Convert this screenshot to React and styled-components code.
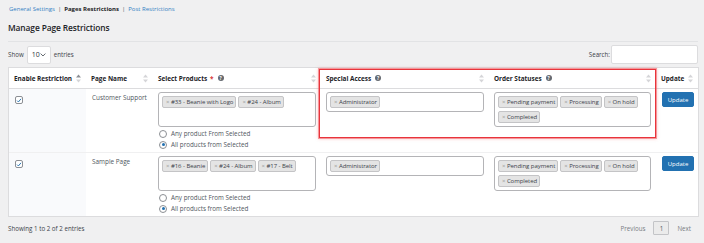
import * as React from "react"
import styled, { createGlobalStyle } from "styled-components"

const GlobalStyle = createGlobalStyle`
  html, body {
    margin: 0;
    padding: 0;
    background: #f0f0f1;
  }
  body {
    font-family: "Open Sans", "Noto Sans", sans-serif;
    color: #3c434a;
    width: 704px;
    height: 243px;
    overflow: hidden;
  }
  * {
    box-sizing: border-box;
  }
`

const rows = [
  {
    page: "Customer Support",
    products: ["#33 - Beanie with Logo", "#24 - Album"],
    access: ["Administrator"],
    statuses: ["Pending payment", "Processing", "On hold", "Completed"],
  },
  {
    page: "Sample Page",
    products: ["#16 - Beanie", "#24 - Album", "#17 - Belt"],
    access: ["Administrator"],
    statuses: ["Pending payment", "Processing", "On hold", "Completed"],
  },
]

const columns = [
  { label: "Enable Restriction", width: 77, sorted: true },
  { label: "Page Name", width: 67 },
  { label: "Select Products", width: 168, required: true, help: true },
  { label: "Special Access", width: 168, help: true },
  { label: "Order Statuses", width: 167, help: true },
  { label: "Update", width: 42 },
]

const SortIcon = ({ active }) => (
  <svg width="5" height="9" viewBox="0 0 5 9">
    <polygon points="2.5,0.5 5,3.6 0,3.6" fill={active ? "#8c8f94" : "#d5d5d8"} />
    <polygon points="0,5.4 5,5.4 2.5,8.5" fill="#d5d5d8" />
  </svg>
)

const CheckIcon = () => (
  <svg width="7" height="7" viewBox="0 0 10 10">
    <path d="M1.8 5.2 L4 7.4 L8.4 2.2" fill="none" stroke="#2271b1" strokeWidth="1.6" />
  </svg>
)

const Chevron = () => (
  <svg width="6" height="4" viewBox="0 0 6 4">
    <path d="M0.6 0.6 L3 3 L5.4 0.6" fill="none" stroke="#50575e" strokeWidth="0.9" />
  </svg>
)

const App = () => {
  return (
    <>
      <GlobalStyle />
      <Page>
        <Nav>
          <NavLink>General Settings</NavLink>
          <Sep>|</Sep>
          <NavCurrent>Pages Restrictions</NavCurrent>
          <Sep>|</Sep>
          <NavLink>Post Restrictions</NavLink>
        </Nav>
        <Title>Manage Page Restrictions</Title>
        <Rule />
        <Controls>
          <Length>
            Show
            <LengthSelect>
              10
              <Chevron />
            </LengthSelect>
            entries
          </Length>
          <SearchLabel>
            Search:
            <SearchInput />
          </SearchLabel>
        </Controls>

        <TableWrap>
          <Table>
            <colgroup>
              {columns.map((c) => (
                <col key={c.label} style={{ width: c.width }} />
              ))}
            </colgroup>
            <thead>
              <tr>
                {columns.map((c) => (
                  <Th key={c.label}>
                    <HeadInner>
                      <HeadLabel>
                        {c.label}
                        {c.required && <Required>*</Required>}
                        {c.help && <Help>?</Help>}
                      </HeadLabel>
                      <SortIcon active={c.sorted} />
                    </HeadInner>
                  </Th>
                ))}
              </tr>
            </thead>
            <tbody>
              {rows.map((r) => (
                <tr key={r.page}>
                  <Td $first>
                    <Checkbox>
                      <CheckIcon />
                    </Checkbox>
                  </Td>
                  <Td>
                    <PageName>{r.page}</PageName>
                  </Td>
                  <Td>
                    <MultiSelect $tall>
                      {r.products.map((p) => (
                        <Tag key={p}>
                          <Remove>×</Remove>
                          {p}
                        </Tag>
                      ))}
                    </MultiSelect>
                    <RadioGroup>
                      <RadioRow>
                        <Radio />
                        Any product From Selected
                      </RadioRow>
                      <RadioRow>
                        <Radio $checked />
                        All products from Selected
                      </RadioRow>
                    </RadioGroup>
                  </Td>
                  <Td>
                    <MultiSelect>
                      {r.access.map((a) => (
                        <Tag key={a}>
                          <Remove>×</Remove>
                          {a}
                        </Tag>
                      ))}
                    </MultiSelect>
                  </Td>
                  <Td>
                    <MultiSelect>
                      {r.statuses.map((s) => (
                        <Tag key={s}>
                          <Remove>×</Remove>
                          {s}
                        </Tag>
                      ))}
                    </MultiSelect>
                  </Td>
                  <Td>
                    <UpdateButton>Update</UpdateButton>
                  </Td>
                </tr>
              ))}
            </tbody>
          </Table>
          {/* highlight annotation over the Special Access / Order Statuses columns */}
          <Highlight />
        </TableWrap>

        <Footer>
          <Info>Showing 1 to 2 of 2 entries</Info>
          <Paging>
            <PageLink>Previous</PageLink>
            <PageCurrent>1</PageCurrent>
            <PageLink>Next</PageLink>
          </Paging>
        </Footer>
      </Page>
    </>
  )
}

export default App

const Page = styled.div`
  padding: 3px 6px 0 8px;
`

const Nav = styled.div`
  display: flex;
  align-items: center;
  gap: 2px;
  height: 11px;
  font-size: 6px;
  padding-left: 1px;
`

const NavLink = styled.span`
  color: #3582c4;
`

const NavCurrent = styled.span`
  color: #1d2327;
  font-weight: 700;
`

const Sep = styled.span`
  color: #50575e;
  padding: 0 1px;
`

const Title = styled.h1`
  margin: 8px 0 0;
  height: 12px;
  line-height: 12px;
  font-size: 8.4px;
  letter-spacing: -0.1px;
  font-weight: 600;
  color: #1d2327;
`

const Rule = styled.div`
  height: 1px;
  background: #e2e3e5;
  margin: 7px 0 0;
`

const Controls = styled.div`
  display: flex;
  justify-content: space-between;
  align-items: center;
  margin-top: 3px;
  height: 19px;
  font-size: 6.2px;
  color: #3c434a;
`

const Length = styled.label`
  display: flex;
  align-items: center;
  gap: 3px;
`

const LengthSelect = styled.span`
  display: flex;
  align-items: center;
  justify-content: space-between;
  width: 24px;
  height: 18px;
  padding: 0 4px 0 4px;
  background: #fff;
  border: 1px solid #dcdcde;
  border-radius: 2px;
  font-size: 7px;
  color: #2c3338;
`

const SearchLabel = styled.label`
  display: flex;
  align-items: center;
  gap: 1px;
`

const SearchInput = styled.span`
  display: block;
  width: 87px;
  height: 19px;
  background: #fff;
  border: 1px solid #dcdcde;
  border-radius: 2px;
`

const TableWrap = styled.div`
  position: relative;
  margin-top: 3px;
  width: 690px;
`

const Table = styled.table`
  width: 690px;
  table-layout: fixed;
  border-collapse: separate;
  border-spacing: 0;
  background: #fff;
  border: 1px solid #dcdcde;
`

const Th = styled.th`
  height: 21px;
  padding: 0 5px 0 5px;
  border-bottom: 1px solid #dcdcde;
  text-align: left;
  vertical-align: middle;
  font-size: 6.4px;
  font-weight: 700;
  color: #1d2327;
  white-space: nowrap;
`

const HeadInner = styled.div`
  display: flex;
  align-items: center;
  justify-content: space-between;
`

const HeadLabel = styled.span`
  display: flex;
  align-items: center;
  gap: 2px;
`

const Required = styled.span`
  color: #d63638;
  margin-left: 1px;
`

const Help = styled.span`
  display: inline-flex;
  align-items: center;
  justify-content: center;
  width: 6px;
  height: 6px;
  margin-left: 2px;
  border-radius: 50%;
  background: #646970;
  color: #fff;
  font-size: 4.6px;
  font-weight: 700;
  line-height: 1;
`

const Td = styled.td`
  padding: 3px 5px 2px 5px;
  vertical-align: top;
  border-bottom: 1px solid #f0f0f1;
  background: ${(p) => (p.$first ? "#f9fafc" : "#fff")};
  tr:last-child & {
    border-bottom: none;
  }
`

const Checkbox = styled.span`
  display: flex;
  align-items: center;
  justify-content: center;
  width: 8px;
  height: 8px;
  margin: 4px 0 0 1px;
  border: 1px solid #8c8f94;
  border-radius: 2px;
  background: #fff;
`

const PageName = styled.div`
  font-size: 6.4px;
  color: #50575e;
  line-height: 9px;
  padding: 1px 0 0 1px;
`

const MultiSelect = styled.div`
  display: flex;
  flex-wrap: wrap;
  align-content: flex-start;
  gap: 3px 2px;
  min-height: ${(p) => (p.$tall ? "35px" : "20px")};
  padding: 3px 2px 3px 3px;
  background: #fff;
  border: 1px solid #b4b4b7;
  border-radius: 3px;
`

const Tag = styled.span`
  display: inline-flex;
  align-items: center;
  height: 12px;
  padding: 0 2px 0 3px;
  background: #e4e4e4;
  border: 1px solid #c4c4c6;
  border-radius: 2px;
  font-size: 6px;
  letter-spacing: -0.05px;
  color: #3c434a;
  white-space: nowrap;
`

const Remove = styled.span`
  color: #999;
  margin-right: 1.5px;
  font-size: 6px;
`

const RadioGroup = styled.div`
  margin-top: 1px;
`

const RadioRow = styled.div`
  display: flex;
  align-items: center;
  gap: 4px;
  height: 11px;
  padding-left: 1px;
  font-size: 6.3px;
  color: #50575e;
`

const Radio = styled.span`
  position: relative;
  width: 8px;
  height: 8px;
  border: 1px solid #8c8f94;
  border-radius: 50%;
  background: #fff;
  &::after {
    content: "";
    display: ${(p) => (p.$checked ? "block" : "none")};
    position: absolute;
    left: 1.5px;
    top: 1.5px;
    width: 3px;
    height: 3px;
    border-radius: 50%;
    background: #2271b1;
  }
`

const UpdateButton = styled.button`
  display: block;
  width: 32px;
  height: 15px;
  margin: 0 0 0 1px;
  padding: 0;
  background: #2271b1;
  border: 1px solid #2271b1;
  border-radius: 2px;
  color: #fff;
  font-family: inherit;
  font-size: 6px;
`

const Highlight = styled.div`
  position: absolute;
  left: 311px;
  top: 2px;
  width: 337px;
  height: 69px;
  border: 1px solid #e8343b;
  box-shadow: 0 0 0 1px rgba(240, 90, 96, 0.55), 0 0 3px 1px rgba(240, 110, 115, 0.35);
  pointer-events: none;
`

const Footer = styled.div`
  display: flex;
  justify-content: space-between;
  align-items: center;
  height: 18px;
  margin-top: 2px;
  font-size: 6.2px;
  color: #3c434a;
`

const Info = styled.span``

const Paging = styled.div`
  display: flex;
  align-items: center;
  gap: 8px;
  padding-right: 7px;
`

const PageLink = styled.span`
  color: #787c82;
`

const PageCurrent = styled.span`
  display: flex;
  align-items: center;
  justify-content: center;
  width: 16px;
  height: 14px;
  background: #ebebeb;
  border: 1px solid #c3c4c7;
  border-radius: 1px;
  color: #50575e;
`
